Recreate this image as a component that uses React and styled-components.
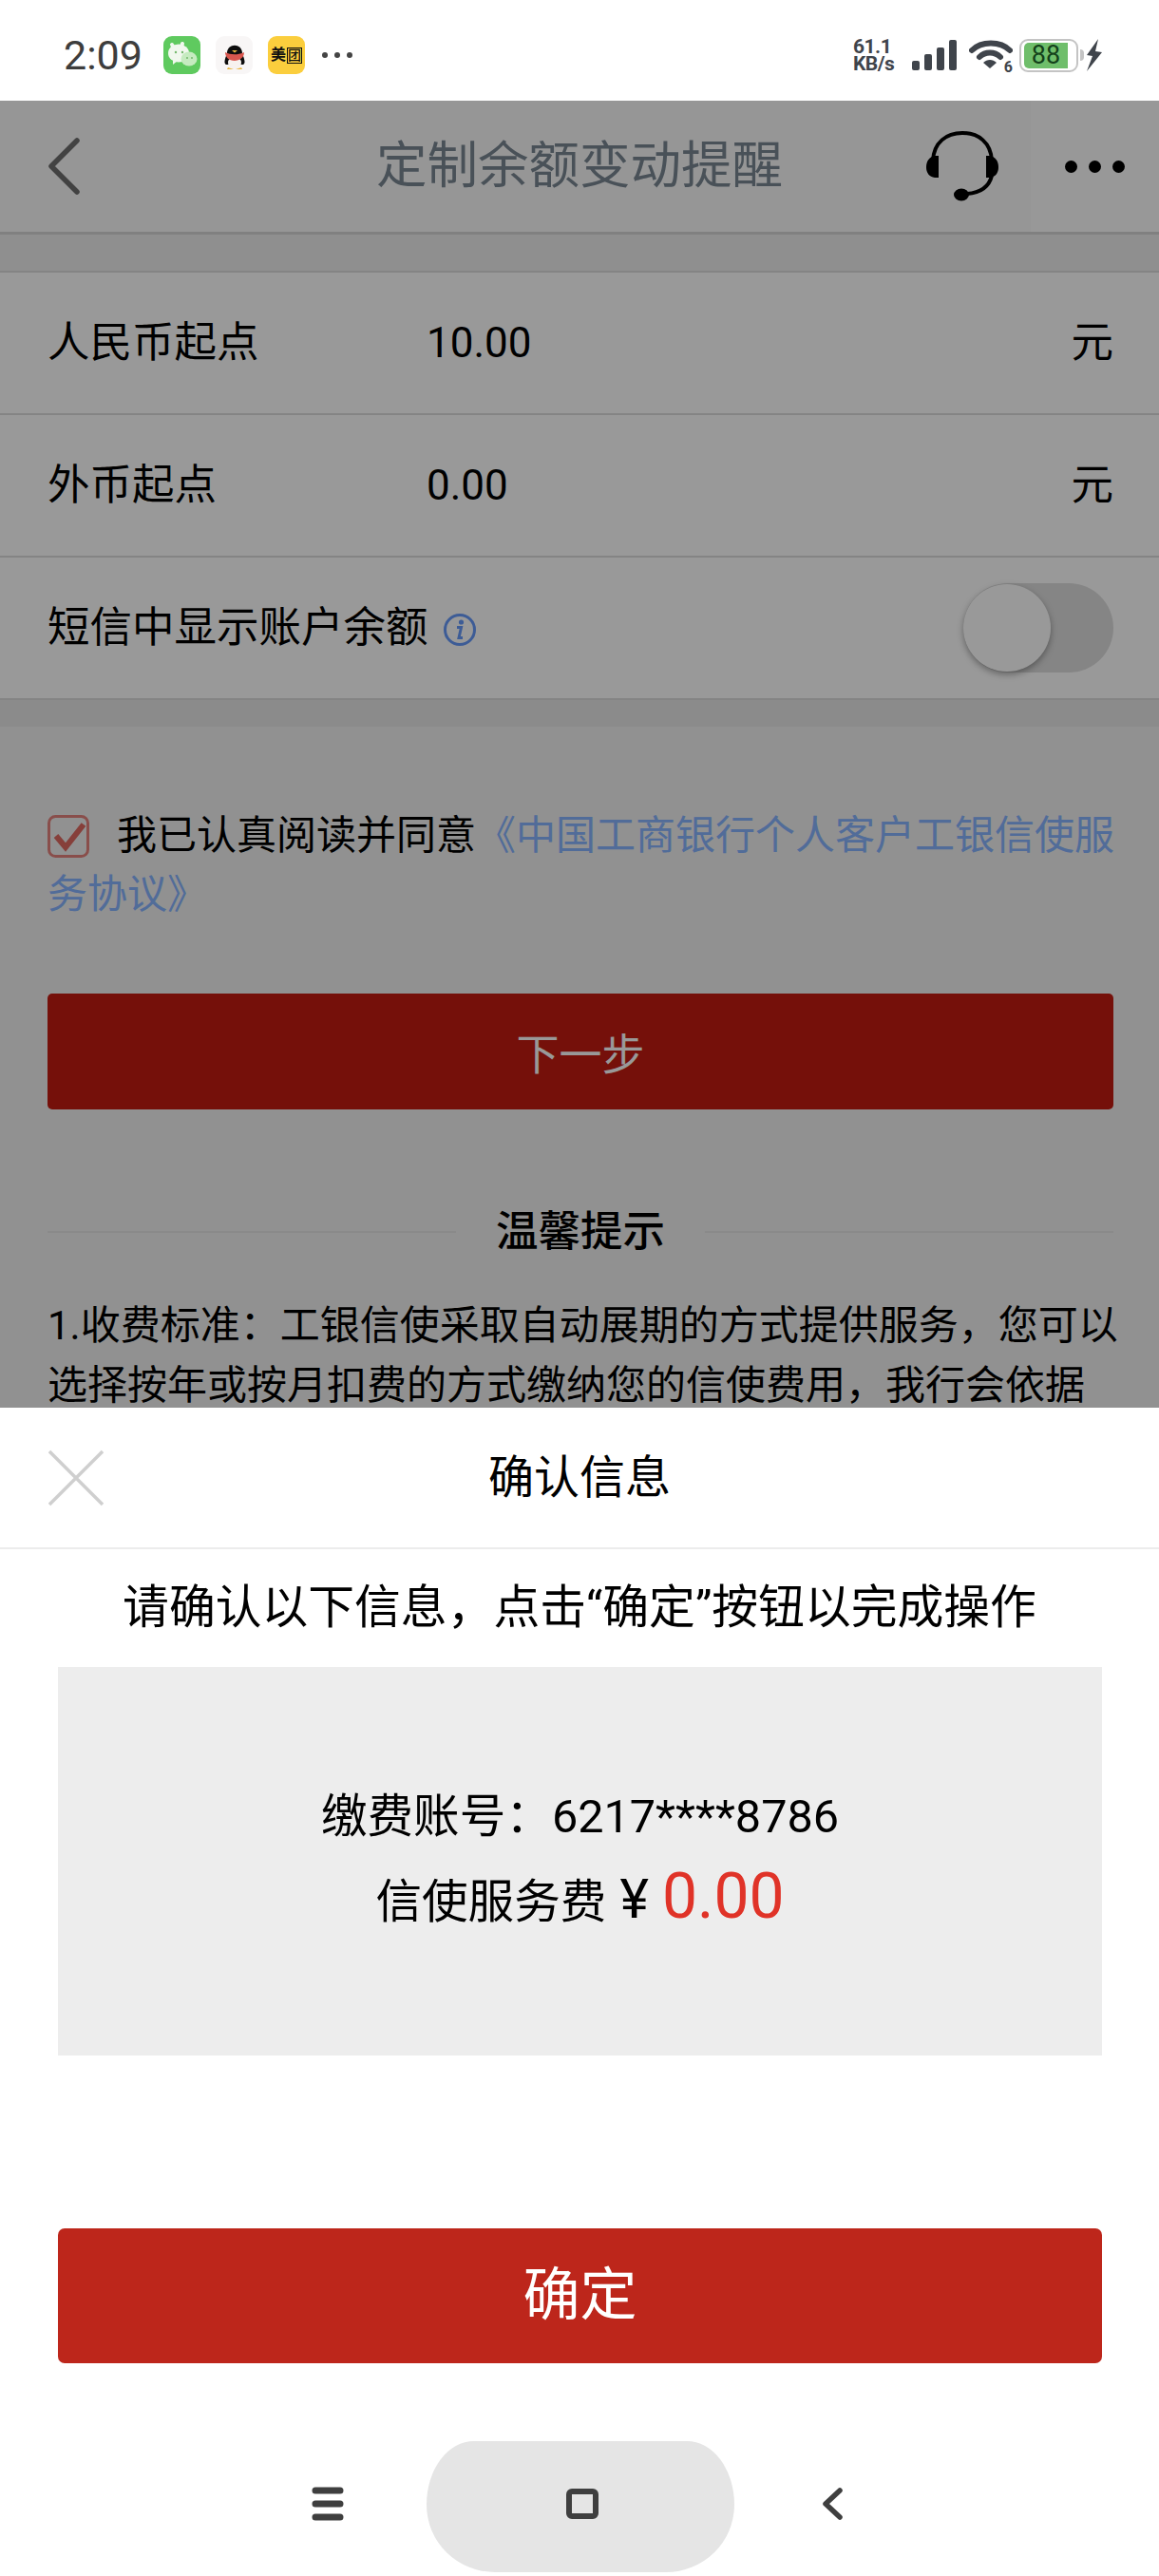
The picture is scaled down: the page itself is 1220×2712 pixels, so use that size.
import React from 'react'
import styled, { createGlobalStyle } from 'styled-components'

const FONT = `Roboto, "Noto Sans CJK SC", sans-serif`

const Global = createGlobalStyle`
  html, body { margin: 0; padding: 0; background: #fff; }
  body { font-family: ${FONT}; color: #000; }
  * { box-sizing: border-box; }
`

const Phone = styled.div`
  width: 1220px;
  height: 2712px;
  display: flex;
  flex-direction: column;
  overflow: hidden;
`

const StatusBar = styled.div`
  height: 106px;
  flex: none;
  background: #fff;
  display: flex;
  align-items: center;
  justify-content: space-between;
  padding: 10px 58px 0 67px;
`

const StatusLeft = styled.div`
  display: flex;
  align-items: center;
`

const Time = styled.span`
  font-size: 43px;
  color: #3d3d3d;
  width: 105px;
  line-height: 1;
`

const AppIcon = styled.span`
  width: 39px;
  height: 40px;
  margin-right: 16px;
  border-radius: 9px;
  display: flex;
  align-items: center;
  justify-content: center;
  background: ${p => p.$bg};
`

const MeituanMark = styled.span`
  display: flex;
  align-items: center;
  font-size: 16px;
  line-height: 18px;
  font-weight: 700;
  color: #111;
  white-space: nowrap;
  b {
    font-weight: 500;
    font-size: 14px;
    line-height: 15px;
    border: 1px solid #111;
    margin-left: 1px;
  }
`

const MoreDots = styled.span`
  display: flex;
  gap: 7px;
  margin-left: 2px;
  i {
    width: 6px;
    height: 6px;
    border-radius: 50%;
    background: #444;
  }
`

const StatusRight = styled.div`
  display: flex;
  align-items: center;
`

const Speed = styled.div`
  width: 62px;
  font-weight: 700;
  color: #3f444b;
  line-height: 18px;
  font-size: 21px;
  letter-spacing: -0.5px;
`

const WifiWrap = styled.span`
  position: relative;
  display: flex;
  margin-left: 12px;
`

const WifiSix = styled.span`
  position: absolute;
  right: 0;
  bottom: -4px;
  font-size: 16px;
  line-height: 16px;
  font-weight: 700;
  color: #3f444b;
`

const Battery = styled.span`
  position: relative;
  width: 62px;
  height: 35px;
  margin-left: 7px;
  border: 2px solid #c4c4c4;
  border-radius: 9px;
  padding: 2px;
  display: flex;
  &::after {
    content: '';
    position: absolute;
    right: -8px;
    top: 9px;
    width: 4px;
    height: 12px;
    border-radius: 0 4px 4px 0;
    background: #c4c4c4;
  }
`

const BatteryFill = styled.span`
  width: 46px;
  background: #6fbe6b;
  border-radius: 5px 0 0 5px;
  color: #13401a;
  font-size: 27px;
  line-height: 27px;
  text-align: center;
  margin-left: 1px;
`

const Stage = styled.div`
  position: relative;
  flex: 1;
  overflow: hidden;
  background: #f2f2f2;
`

const NavBar = styled.div`
  height: 141px;
  background: #fbfbfb;
  border-bottom: 3px solid #d6d6d6;
  display: flex;
  align-items: center;
  justify-content: space-between;
  position: relative;
`

const NavTitle = styled.div`
  position: absolute;
  left: 0;
  right: 0;
  text-align: center;
  font-size: 53.5px;
  line-height: 70px;
  color: #7a8793;
`

const BackBtn = styled.span`
  margin-left: 50px;
  display: flex;
`

const NavActions = styled.div`
  display: flex;
  align-items: center;
  height: 138px;
  margin-left: auto;
`

const MoreBtn = styled.span`
  width: 135px;
  height: 138px;
  margin-left: 33px;
  background: #fdfdfd;
  display: flex;
  align-items: center;
  justify-content: center;
  gap: 12px;
  i {
    width: 13px;
    height: 13px;
    border-radius: 50%;
    background: #000;
  }
`

const TopStrip = styled.div`
  height: 38px;
  background: #eeeeee;
`

const FormCard = styled.div`
  background: #fff;
  border-top: 2px solid #dcdcdc;
`

const Row = styled.div`
  height: 150px;
  padding: 0 48px 0 50px;
  display: flex;
  align-items: center;
  font-size: 44.5px;
  line-height: 60px;
  border-bottom: 2px solid #dcdcdc;
`

const RowLabel = styled.span`
  width: 399px;
  flex: none;
`

const RowValue = styled.span`
  flex: 1;
  font-size: 44px;
`

const InfoIcon = styled.span`
  display: flex;
  margin: 4px 0 0 16px;
`

const Toggle = styled.span`
  margin-left: auto;
  width: 158px;
  height: 94px;
  border-radius: 47px;
  background: #dedede;
  position: relative;
`

const Knob = styled.span`
  position: absolute;
  left: 0;
  top: 1px;
  width: 92px;
  height: 92px;
  border-radius: 50%;
  background: #fff;
  box-shadow: 0 3px 7px rgba(0, 0, 0, 0.35);
`

const Band = styled.div`
  height: 28px;
  background: #e8e8e8;
`

const Body = styled.div`
  padding: 84px 48px 0 50px;
`

const Agree = styled.div`
  font-size: 42px;
  line-height: 62px;
  margin-right: -3px;
`

const CheckBox = styled.span`
  display: inline-flex;
  width: 44px;
  height: 45px;
  vertical-align: -9px;
  margin-right: 29px;
`

const AgreeLink = styled.span`
  color: #88b4ff;
`

const NextBtn = styled.div`
  margin-top: 73px;
  height: 122px;
  background: #c31b11;
  border-radius: 5px;
  color: #fff;
  font-size: 45px;
  display: flex;
  align-items: center;
  justify-content: center;
`

const TipHead = styled.div`
  margin-top: 98px;
  display: flex;
  align-items: center;
  font-size: 44.5px;
  font-weight: 500;
  line-height: 62px;
  &::before, &::after {
    content: '';
    flex: 1;
    height: 2px;
    background: #e6e6e6;
  }
  span { margin: 0 42px; }
`

const TipText = styled.div`
  margin: 36px -8px 0 0;
  font-size: 42px;
  line-height: 63px;
`

const Scrim = styled.div`
  position: absolute;
  inset: 0;
  background: rgba(0, 0, 0, 0.4);
`

const Sheet = styled.div`
  position: absolute;
  left: 0;
  right: 0;
  top: 1376px;
  bottom: 0;
  background: #fff;
  display: flex;
  flex-direction: column;
`

const SheetHead = styled.div`
  height: 149px;
  flex: none;
  position: relative;
  border-bottom: 2px solid #ececec;
  display: flex;
  align-items: center;
  justify-content: center;
  font-size: 48px;
  line-height: 62px;
`

const CloseIcon = styled.span`
  position: absolute;
  left: 50px;
  top: 44px;
  display: flex;
`

const SheetHint = styled.div`
  text-align: center;
  font-size: 48.8px;
  line-height: 62px;
  margin-top: 31px;
`

const InfoBox = styled.div`
  margin: 31px 60px 0 61px;
  height: 409px;
  background: #ededed;
  padding-top: 127px;
  text-align: center;
  font-size: 48.6px;
  line-height: 62px;
`

const AmountLine = styled.div`
  margin-top: 22px;
  display: flex;
  align-items: baseline;
  justify-content: center;
`

const Yen = styled.span`
  margin: 0 14px;
  font-size: 58px;
`

const Amount = styled.span`
  font-size: 66px;
  color: #e03328;
`

const ConfirmBtn = styled.div`
  margin: 182px 60px 0 61px;
  height: 142px;
  flex: none;
  background: #bd261b;
  border-radius: 7px;
  color: #fff;
  font-size: 60px;
  line-height: 70px;
  display: flex;
  align-items: center;
  justify-content: center;
`

const SoftKeys = styled.div`
  margin-top: 82px;
  height: 138px;
  padding-right: 6px;
  display: flex;
  align-items: center;
  justify-content: center;
`

const HomePill = styled.div`
  width: 324px;
  height: 138px;
  margin: 0 92px 0 87px;
  padding: 0 0 6px 4px;
  background: #e5e5e5;
  border-radius: 50px 50px 72px 72px / 67px 67px 71px 71px;
  display: flex;
  align-items: center;
  justify-content: center;
`

const SoftIcon = styled.svg`
  margin-bottom: 6px;
`

const Wechat = () => (
  <svg width="32" height="30" viewBox="0 0 32 30">
    <ellipse cx="12" cy="13" rx="11" ry="9.5" fill="#f1f8ee" />
    <path d="M5 4l3 5M16 3l-2 6" stroke="#f1f8ee" strokeWidth="4" strokeLinecap="round" />
    <path d="M6 20l0 5 5-4z" fill="#f1f8ee" />
    <ellipse cx="23" cy="19" rx="8.5" ry="7.5" fill="#c6ebc0" />
    <circle cx="9" cy="12" r="1.2" fill="#74b96c" />
    <circle cx="16" cy="12" r="1.2" fill="#74b96c" />
    <circle cx="21" cy="18" r="1" fill="#74b96c" />
    <circle cx="26" cy="18" r="1" fill="#74b96c" />
  </svg>
)

const Penguin = () => (
  <svg width="24" height="32" viewBox="0 0 24 32">
    <path d="M3 26C0 24 2 20 4 14 4 3 20 3 20 14c2 6 4 10 1 12z" fill="#0e0e0e" />
    <ellipse cx="12" cy="24" rx="7" ry="6.5" fill="#f7f2ee" />
    <path d="M2 13c6 3 14 3 20 0 0 5-4 9-10 9S2 18 2 13z" fill="#d9574f" />
    <path d="M9 11h6l-3 2.5z" fill="#e9b53f" />
    <path d="M5 29l6 2H4zM19 29l-6 2h7z" fill="#e9b53f" />
  </svg>
)

const Signal = () => (
  <svg width="48" height="32" viewBox="0 0 48 32">
    <rect x="0" y="22" width="8" height="10" rx="2" fill="#3f444b" />
    <rect x="13" y="15" width="8" height="17" rx="2" fill="#3f444b" />
    <rect x="26" y="8" width="8" height="24" rx="2" fill="#3f444b" />
    <rect x="39" y="0" width="8" height="32" rx="2" fill="#3f444b" />
  </svg>
)

const Wifi = () => (
  <svg width="46" height="34" viewBox="0 0 46 34">
    <path d="M3 12C13 2 33 2 43 12" fill="none" stroke="#3f444b" strokeWidth="6" strokeLinecap="round" />
    <path d="M11 19C17 13 27 13 33 19" fill="none" stroke="#3f444b" strokeWidth="6" strokeLinecap="round" />
    <path d="M15 25c4-4 10-4 14 0l-7 6z" fill="#3f444b" />
  </svg>
)

const Bolt = () => (
  <svg width="20" height="34" viewBox="0 0 20 34" style={{ marginLeft: 7 }}>
    <path d="M14 0L2 17l6 1-6 16 16-20-7-1z" fill="#3f444b" />
  </svg>
)

const Headset = () => (
  <svg width="78" height="76" viewBox="0 0 78 76">
    <path d="M8 32C9 13 22 3 39 3s30 10 31 29" fill="none" stroke="#000" strokeWidth="4" />
    <path d="M70 48C67 60 57 66 44 67" fill="none" stroke="#000" strokeWidth="4" />
    <path d="M14 27H10C4 28 1 33 1 39s3 10 9 11h4z" fill="#000" />
    <path d="M64 27h4c6 1 9 6 9 12s-3 10-9 11h-4z" fill="#000" />
    <ellipse cx="38" cy="68" rx="8" ry="6.5" fill="#000" />
  </svg>
)

const Rows = [
  { label: '人民币起点', value: '10.00' },
  { label: '外币起点', value: '0.00' },
]

export default function App() {
  return (
    <Phone>
      <Global />
      <StatusBar>
        <StatusLeft>
          <Time>2:09</Time>
          <AppIcon $bg="#5fca5f"><Wechat /></AppIcon>
          <AppIcon $bg="#f8f6f6"><Penguin /></AppIcon>
          <AppIcon $bg="#fbce3d"><MeituanMark>美<b>团</b></MeituanMark></AppIcon>
          <MoreDots><i /><i /><i /></MoreDots>
        </StatusLeft>
        <StatusRight>
          <Speed><div>61.1</div><div>KB/s</div></Speed>
          <Signal />
          <WifiWrap><Wifi /><WifiSix>6</WifiSix></WifiWrap>
          <Battery><BatteryFill>88</BatteryFill></Battery>
          <Bolt />
        </StatusRight>
      </StatusBar>
      <Stage>
        <NavBar>
          <BackBtn>
            <svg width="34" height="60" viewBox="0 0 34 60">
              <path d="M31 3L4 30l27 27" fill="none" stroke="#6f6f6f" strokeWidth="5.5" strokeLinecap="round" strokeLinejoin="round" />
            </svg>
          </BackBtn>
          <NavTitle>定制余额变动提醒</NavTitle>
          <NavActions>
            <Headset />
            <MoreBtn><i /><i /><i /></MoreBtn>
          </NavActions>
        </NavBar>
        <TopStrip />
        <FormCard>
          {Rows.map(r => (
            <Row key={r.label}>
              <RowLabel>{r.label}</RowLabel>
              <RowValue>{r.value}</RowValue>
              <span>元</span>
            </Row>
          ))}
          <Row>
            <span>短信中显示账户余额</span>
            <InfoIcon>
              <svg width="34" height="34" viewBox="0 0 34 34">
                <circle cx="17" cy="17" r="15.5" fill="none" stroke="#6699fa" strokeWidth="3" />
                <circle cx="18.5" cy="9" r="2.6" fill="#6699fa" />
                <path d="M14 14.5h4.5L16 25.5h4" fill="none" stroke="#6699fa" strokeWidth="3" />
              </svg>
            </InfoIcon>
            <Toggle><Knob /></Toggle>
          </Row>
        </FormCard>
        <Band />
        <Body>
          <Agree>
            <CheckBox>
              <svg width="44" height="45" viewBox="0 0 44 45">
                <rect x="1.5" y="1.5" width="41" height="42" rx="7" fill="none" stroke="#e5837d" strokeWidth="3" />
                <path d="M9 22l10 12L38 10" fill="none" stroke="#e06a62" strokeWidth="6" />
              </svg>
            </CheckBox>
            我已认真阅读并同意<AgreeLink>《中国工商银行个人客户工银信使服务协议》</AgreeLink>
          </Agree>
          <NextBtn>下一步</NextBtn>
          <TipHead><span>温馨提示</span></TipHead>
          <TipText>
            1.收费标准：工银信使采取自动展期的方式提供服务，您可以选择按年或按月扣费的方式缴纳您的信使费用，我行会依据
          </TipText>
        </Body>
        <Scrim />
        <Sheet>
          <SheetHead>
            <CloseIcon>
              <svg width="60" height="60" viewBox="0 0 60 60">
                <path d="M2 2l56 56M58 2L2 58" stroke="#cfcfcf" strokeWidth="3.5" />
              </svg>
            </CloseIcon>
            确认信息
          </SheetHead>
          <SheetHint>请确认以下信息，点击“确定”按钮以完成操作</SheetHint>
          <InfoBox>
            <div>缴费账号：6217****8786</div>
            <AmountLine>信使服务费<Yen>¥</Yen><Amount>0.00</Amount></AmountLine>
          </InfoBox>
          <ConfirmBtn>确定</ConfirmBtn>
          <SoftKeys>
            <SoftIcon width="34" height="36" viewBox="0 0 34 36">
              <path d="M4 4h26M4 18h26M4 32h26" stroke="#3f3f3f" strokeWidth="7" strokeLinecap="round" />
            </SoftIcon>
            <HomePill>
              <svg width="34" height="32" viewBox="0 0 34 32">
                <rect x="3" y="3" width="28" height="26" rx="3" fill="none" stroke="#3f3f3f" strokeWidth="6" />
              </svg>
            </HomePill>
            <SoftIcon width="22" height="34" viewBox="0 0 22 34">
              <path d="M19 3L4 17l15 14" fill="none" stroke="#3f3f3f" strokeWidth="5.5" strokeLinecap="round" strokeLinejoin="round" />
            </SoftIcon>
          </SoftKeys>
        </Sheet>
      </Stage>
    </Phone>
  )
}
